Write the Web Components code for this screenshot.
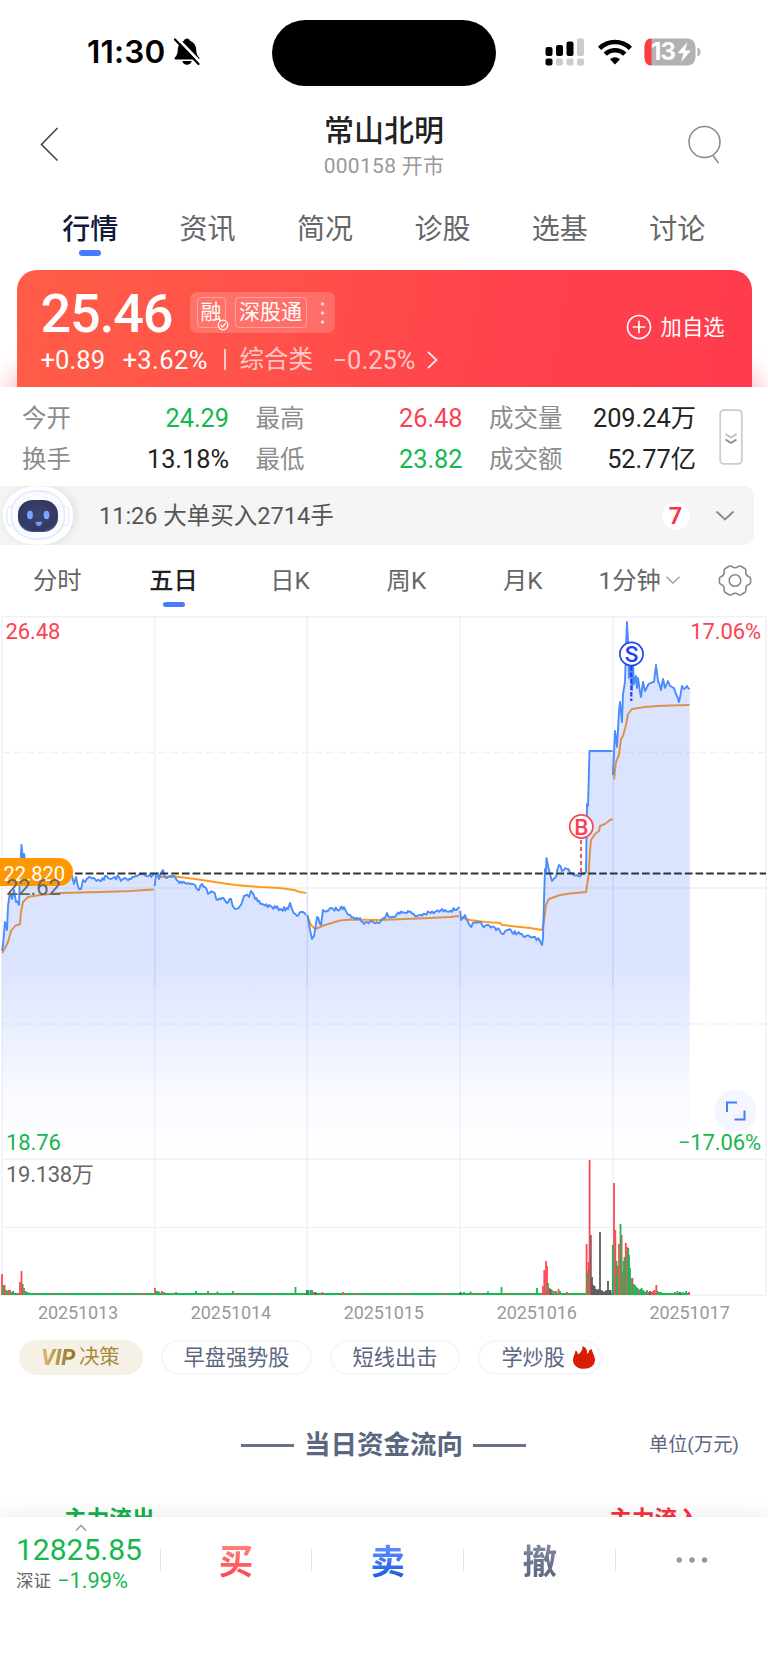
<!DOCTYPE html>
<html lang="zh-CN">
<head>
<meta charset="utf-8">
<title>常山北明 000158</title>
<style>
  html, body {
    margin: 0;
    padding: 0;
    background: #fff;
  }

  body {
    width: 768px;
    height: 1665px;
    overflow: hidden;
    font-family: Roboto, "Noto Sans CJK SC", sans-serif;
    color: #222;
  }
</style>
</head>
<body>
<stock-page></stock-page>

<script>
class StatusBar extends HTMLElement {
  constructor() {
    super();
    this.attachShadow({ mode: 'open' });
  }

  connectedCallback() {
    this.shadowRoot.innerHTML = `
      <style>
        :host {
          display: grid;
          grid-template-columns: 272px 224px 1fr;
          height: 104px;
          box-sizing: border-box;
          padding-top: 20px;
          align-items: start;
        }
        .left, .right {
          display: flex;
          height: 64px;
          align-items: center;
        }
        .left { padding-left: 87px; }
        .time {
          font: 600 31.500px/66px Inter, sans-serif;
          letter-spacing: 0.2px;
          color: #000;
          width: 86px;
          white-space: nowrap;
        }
        .island {
          height: 66px;
          border-radius: 33px;
          background: #000;
        }
        .right { padding-left: 49px; }
        .wifi { margin-left: 13px; }
        .battery {
          position: relative;
          margin-left: 12px;
          width: 57px;
          height: 28px;
        }
        .level {
          position: absolute;
          left: 7px;
          top: 0;
          font: 700 24px/28px Inter, sans-serif;
          letter-spacing: -0.8px;
          color: #fff;
        }
        svg { display: block; flex: none; }
      </style>
      <div class="left">
        <span class="time">11:30</span>
        <svg width="28" height="30" viewBox="0 0 28 30">
          <path d="M14 1.5c1.6 0 2.8 1 3 2.300 4 1.500 6 4.800 6.200 8.800.2 4 .9 6 2.900 7.900.8.700.4 2-.8 2H2.700c-1.200 0-1.600-1.300-.8-2 2-1.900 2.700-3.900 2.900-7.900.2-4 2.200-7.300 6.200-8.800.2-1.300 1.400-2.300 3-2.300z" fill="#000"/>
          <path d="M9.300 24h9.400c-.5 2.400-2.300 3.800-4.700 3.800s-4.200-1.400-4.700-3.800z" fill="#000"/>
          <path d="M4 1l24 25" stroke="#fff" stroke-width="2.600"/>
          <path d="M2 2.500l23.500 24.500" stroke="#000" stroke-width="2.200" stroke-linecap="round"/>
        </svg>
      </div>
      <div class="island"></div>
      <div class="right">
        <svg width="40" height="28" viewBox="0 0 40 28">
          <g fill="#000">
            <rect x="0.500" y="9" width="7" height="9" rx="2"/>
            <rect x="11" y="7" width="7" height="11" rx="2"/>
            <rect x="21.500" y="3.500" width="7" height="14.500" rx="2"/>
            <rect x="0.500" y="20.500" width="7" height="7" rx="2"/>
          </g>
          <g fill="#ccc">
            <rect x="32" y="0.500" width="7" height="17.500" rx="2"/>
            <rect x="11" y="20.500" width="7" height="7" rx="2"/>
            <rect x="21.500" y="20.500" width="7" height="7" rx="2"/>
            <rect x="32" y="20.500" width="7" height="7" rx="2"/>
          </g>
        </svg>
        <svg class="wifi" width="34" height="26" viewBox="0 0 34 26" fill="none" stroke="#000" stroke-width="4.600">
          <path d="M1.600 9.300a22 22 0 0 1 30.800 0"/>
          <path d="M7.200 15.200a14 14 0 0 1 19.600 0"/>
          <path d="M17 25.500l-5-5.200a7.200 7.200 0 0 1 10 0z" fill="#000" stroke="none"/>
        </svg>
        <div class="battery">
          <svg width="57" height="28" viewBox="0 0 57 28">
            <rect x="0.500" y="0.500" width="51" height="27" rx="8" fill="#b2b2b2"/>
            <path d="M7.500 0.500h-1a6 8 0 0 0-6 8v11a6 8 0 0 0 6 8h1z" fill="#ff3b3f"/>
            <path d="M53.500 9.500q3 1 3 4.500t-3 4.500z" fill="#b2b2b2"/>
            <path d="M43.500 4l-10 11.300h6l-2.400 8.700 10-11.500h-6z" fill="#fff"/>
          </svg>
          <span class="level">13</span>
        </div>
      </div>
    `;
  }
}

class StockHeader extends HTMLElement {
  constructor() {
    super();
    this.attachShadow({ mode: 'open' });
  }

  connectedCallback() {
    this.shadowRoot.innerHTML = `
      <style>
        :host {
          display: grid;
          grid-template-columns: 1fr 300px 1fr;
          height: 88px;
          box-sizing: border-box;
          padding: 0 46px 0 38px;
        }
        svg { display: block; margin-top: 20px; }
        .search { justify-self: end; }
        .titles { text-align: center; padding-left: 8px; }
        .name {
          font-weight: 500;
          font-size: 30px;
          line-height: 40px;
          margin-top: 7px;
          color: #222;
        }
        .code {
          font-size: 21px;
          line-height: 26px;
          margin-top: 2px;
          letter-spacing: 0.3px;
          color: #999;
        }
      </style>
      <svg width="24" height="42" viewBox="0 0 24 42" fill="none" stroke="#444" stroke-width="1.600">
        <path d="M19.500 4L3.500 20.500l16 16"/>
      </svg>
      <div class="titles">
        <div class="name"><slot name="name"></slot></div>
        <div class="code"><slot name="code"></slot></div>
      </div>
      <svg class="search" width="36" height="42" viewBox="0 0 36 42" fill="none" stroke="#888" stroke-width="1.500">
        <circle cx="18.500" cy="18" r="15.500"/>
        <path d="M27 31.500l5.500 7.500"/>
      </svg>
    `;
  }
}

class StockTabs extends HTMLElement {
  constructor() {
    super();
    this.attachShadow({ mode: 'open' });
  }

  connectedCallback() {
    const tabs = (this.getAttribute('tabs') || '').split(',');
    this.shadowRoot.innerHTML = `
      <style>
        :host {
          display: grid;
          grid-template-columns: repeat(6, 1fr);
          height: 77px;
          box-sizing: border-box;
          padding: 0 32px 0 31.500px;
          font-size: 28px;
          color: #666;
        }
        .tab {
          display: flex;
          flex-direction: column;
          align-items: center;
          line-height: 40px;
          padding-top: 18px;
        }
        .active { font-weight: 500; color: #111a3a; }
        .active::after {
          content: '';
          width: 22px;
          height: 6px;
          border-radius: 3px;
          background: #4a7bff;
        }
      </style>
      ${tabs.map((t, i) => `<div class="tab ${i === 0 ? 'active' : ''}">${t}</div>`).join('')}
    `;
  }
}

class QuoteCard extends HTMLElement {
  constructor() {
    super();
    this.attachShadow({ mode: 'open' });
  }

  connectedCallback() {
    this.shadowRoot.innerHTML = `
      <style>
        :host {
          display: block;
          height: 118px;
          overflow: hidden;
          color: #fff;
        }
        .card {
          display: flex;
          justify-content: space-between;
          align-items: center;
          height: 118px;
          box-sizing: border-box;
          margin: 0.500px 16.500px 0 16.500px;
          padding: 0 27px 0 24px;
          border-radius: 20px 20px 0 0;
          background: linear-gradient(100deg, #ff5d48 0%, #ff5149 35%, #ff424b 65%, #ff3b4d 100%);
          box-shadow: 0 108px 24px 10px rgba(255, 75, 75, 0.38);
        }
        .top, .bottom, .tags, .add { display: flex; align-items: center; }
        .top { height: 62px; }
        .price {
          font-size: 54px;
          font-weight: 500;
          line-height: 62px;
          width: 149px;
          margin-top: 2px;
          letter-spacing: -1.200px;
        }
        .tags {
          height: 41px;
          box-sizing: border-box;
          padding: 0 5px 0 7px;
          gap: 9px;
          border-radius: 7px;
          background: rgba(255, 255, 255, 0.18);
          font-size: 21px;
        }
        .tag {
          position: relative;
          height: 29px;
          line-height: 29px;
          padding: 0 3px;
          border: 1px solid rgba(255, 255, 255, 0.35);
          border-radius: 4px;
          white-space: nowrap;
        }
        .tag + .tag { padding: 0 3.500px; }
        .tag svg { position: absolute; right: -4px; bottom: -4px; }
        .bottom {
          height: 32px;
          font-size: 25.500px;
          line-height: 32px;
          white-space: nowrap;
        }
        .chg { width: 82px; font-weight: 450; letter-spacing: 0.1px; }
        .pct { width: 101px; font-weight: 450; letter-spacing: 0.400px; }
        .sep { width: 2px; height: 21px; background: rgba(255, 255, 255, 0.7); margin-right: 14px; }
        .muted { color: rgba(255, 255, 255, 0.7); font-size: 24.500px; width: 93px; }
        .muted.n { width: 94px; font-size: 25.500px; }
        .add { gap: 9px; font-size: 21.300px; margin-top: -3px; }
        .add span { margin-top: -4px; }
        svg { display: block; }
      </style>
      <div class="card">
        <div class="main">
          <div class="top">
            <span class="price">25.46</span>
            <div class="tags">
              <span class="tag">融<svg width="12" height="12" viewBox="0 0 12 12">
                  <circle cx="6" cy="6" r="4.800" fill="#ff7a6b" stroke="#fff" stroke-width="1.200"/>
                  <path d="M3.600 6.200l1.700 1.600 3.200-3.300" fill="none" stroke="#fff" stroke-width="1.200"/>
                </svg></span>
              <span class="tag">深股通</span>
              <svg width="14" height="24" viewBox="0 0 14 24" fill="rgba(255,255,255,.7)">
                <circle cx="6.500" cy="3" r="1.800"/><circle cx="6.500" cy="12" r="1.800"/><circle cx="6.500" cy="21" r="1.800"/>
              </svg>
            </div>
          </div>
          <div class="bottom">
            <span class="chg">+0.89</span><span class="pct">+3.62%</span>
            <span class="sep"></span>
            <span class="muted">综合类</span><span class="muted n">−0.25%</span>
            <svg width="12" height="20" viewBox="0 0 12 20" fill="none" stroke="rgba(255,255,255,.85)" stroke-width="1.800">
              <path d="M1 2l8.500 8L1 18"/>
            </svg>
          </div>
        </div>
        <div class="add">
          <svg width="26" height="26" viewBox="0 0 26 26" fill="none" stroke="#fff" stroke-width="1.600">
            <circle cx="13" cy="13" r="11.500"/>
            <path d="M13 6.800v12.400M6.800 13h12.400"/>
          </svg>
          <span>加自选</span>
        </div>
      </div>
    `;
  }
}

class QuoteStats extends HTMLElement {
  constructor() {
    super();
    this.attachShadow({ mode: 'open' });
  }

  connectedCallback() {
    this.shadowRoot.innerHTML = `
      <style>
        :host {
          display: flex;
          height: 99px;
          box-sizing: border-box;
          padding: 11px 0 0 22px;
          background: #fff;
        }
        .grid {
          display: grid;
          grid-template-columns: 207px 207px 207px;
          column-gap: 26.500px;
          grid-auto-rows: 41px;
          line-height: 41px;
        }
        .cell { display: flex; justify-content: space-between; white-space: nowrap; }
        .k { font-size: 24.500px; color: #8c8c8c; }
        .v { font-size: 25.300px; color: #222; }
        .up { color: #fb4252; }
        .down { color: #14b84e; }
        .more { margin: 11px 0 0 23px; }
      </style>
      <div class="grid">
        <div class="cell"><span class="k">今开</span><span class="v down">24.29</span></div>
        <div class="cell"><span class="k">最高</span><span class="v up">26.48</span></div>
        <div class="cell"><span class="k">成交量</span><span class="v">209.24万</span></div>
        <div class="cell"><span class="k">换手</span><span class="v">13.18%</span></div>
        <div class="cell"><span class="k">最低</span><span class="v down">23.82</span></div>
        <div class="cell"><span class="k">成交额</span><span class="v">52.77亿</span></div>
      </div>
      <svg class="more" width="24" height="56" viewBox="0 0 24 56" fill="none">
        <rect x="1.200" y="1.200" width="21.600" height="53.600" rx="3.500" stroke="#ccc" stroke-width="1.700"/>
        <path d="M6.500 25l5.500 3.500 5.500-3.500" stroke="#bbb" stroke-width="1.700"/>
        <path d="M6.500 30.500l5.500 3.500 5.500-3.500" stroke="#888" stroke-width="1.700"/>
      </svg>
    `;
  }
}

class AlertStrip extends HTMLElement {
  constructor() {
    super();
    this.attachShadow({ mode: 'open' });
  }

  connectedCallback() {
    this.shadowRoot.innerHTML = `
      <style>
        :host {
          display: flex;
          align-items: center;
          height: 59px;
          margin-right: 14.500px;
          border-radius: 0 10px 10px 0;
          background: #f5f5f5;
          overflow: hidden;
        }
        svg { display: block; flex: none; }
        .text {
          flex: 1;
          margin-left: 13px;
          font-size: 23.500px;
          line-height: 58px;
          color: #555;
        }
        .count {
          width: 28px;
          height: 28px;
          border-radius: 14px;
          background: #fff;
          text-align: center;
          font-size: 23.500px;
          line-height: 28px;
          font-weight: 600;
          color: #fa3246;
          margin-right: 25px;
        }
        .arrow { margin-right: 19px; }
      </style>
      <svg width="86" height="59" viewBox="0 0 86 59">
        <defs>
          <filter id="sh" x="-20%" y="-20%" width="150%" height="150%">
            <feDropShadow dx="2" dy="0" stdDeviation="4" flood-color="#000" flood-opacity=".1"/>
          </filter>
          <radialGradient id="face" cx=".5" cy=".45" r=".65">
            <stop offset="0" stop-color="#3f4470"/><stop offset=".75" stop-color="#333862"/><stop offset="1" stop-color="#5b6aa8"/>
          </radialGradient>
        </defs>
        <rect x="3" y="0.500" width="70" height="58" rx="31" ry="28" fill="#fff" filter="url(#sh)"/>
        <rect x="7" y="20" width="11" height="20" rx="5" fill="#fff" stroke="#e4ecfb" stroke-width="1.400"/>
        <rect x="58" y="20" width="11" height="20" rx="5" fill="#fff" stroke="#e4ecfb" stroke-width="1.400"/>
        <rect x="11.500" y="5" width="53" height="48" rx="24" ry="22" fill="#f8fbff" stroke="#e4ecfc" stroke-width="1.800"/>
        <rect x="18" y="14" width="40" height="32" rx="15" ry="14" fill="url(#face)"/>
        <ellipse cx="30" cy="29" rx="2.900" ry="4.200" fill="#75a9ff"/>
        <ellipse cx="46.500" cy="29" rx="2.900" ry="4.200" fill="#75a9ff"/>
        <path d="M35.500 35.800h6.600q-.4 4.200-3.300 4.200t-3.300-4.200z" fill="#6d9dff"/>
      </svg>
      <div class="text"><slot></slot></div>
      <div class="count">7</div>
      <svg class="arrow" width="20" height="12" viewBox="0 0 20 12" fill="none" stroke="#888" stroke-width="1.800">
        <path d="M1.500 1.500l8.500 8 8.500-8"/>
      </svg>
    `;
  }
}

class PeriodTabs extends HTMLElement {
  constructor() {
    super();
    this.attachShadow({ mode: 'open' });
  }

  connectedCallback() {
    this.shadowRoot.innerHTML = `
      <style>
        :host {
          display: grid;
          grid-template-columns: repeat(6, 116.400px) 1fr;
          height: 71px;
          margin-left: -1px;
          font-size: 24.300px;
          line-height: 34px;
          color: #666;
        }
        div {
          display: flex;
          flex-direction: column;
          align-items: center;
          padding-top: 19px;
        }
        .active { font-weight: 500; color: #222; }
        .active::after {
          content: '';
          width: 22px;
          height: 5.500px;
          border-radius: 2.800px;
          background: #4a7bff;
          margin-top: 3.500px;
        }
        .drop { flex-direction: row; align-items: flex-start; justify-content: center; gap: 5px; }
        .drop svg { margin-top: 12px; }
        .gear { padding: 19px 0 0 5px; }
      </style>
      <div>分时</div>
      <div class="active">五日</div>
      <div>日K</div>
      <div>周K</div>
      <div>月K</div>
      <div class="drop">1分钟
        <svg width="14" height="9" viewBox="0 0 14 9" fill="none" stroke="#999" stroke-width="1.300"><path d="M.5.800l6.500 6.400L13.500.800"/></svg>
      </div>
      <div class="gear">
        <svg width="34" height="33" viewBox="0 0 34 33" fill="none" stroke="#888" stroke-width="1.600" stroke-linejoin="round">
          <path d="M11 2.300q2-.8 3 .4 3 2.200 6 0 1-1.200 3-.4l4 2.400q1.300 1 .8 2.800-.4 4 3.400 5.300 1.400.4 1.400 2v3.400q0 1.600-1.400 2-3.800 1.300-3.400 5.300.5 1.800-.8 2.800l-4 2.400q-2 .8-3-.4-3-2.200-6 0-1 1.200-3 .4l-4-2.400q-1.300-1-.8-2.800.4-4-3.400-5.300-1.400-.4-1.400-2v-3.400q0-1.600 1.400-2 3.800-1.300 3.400-5.300-.5-1.800.8-2.800z"/>
          <circle cx="17" cy="16.500" r="5.800"/>
        </svg>
      </div>
    `;
  }
}

// Coordinates below are in the chart's own pixel space: y = 0 is the top border
const PRICE = [
  [[2,335],[3,329],[5,306],[7,314],[8,290],[10,276],[12,283],[14,274],[16,286],[19,289],[20,255],[21.5,229],[23,244],[24,238],[26,252],[40,262],[60,264],[72,260],[74,268],[76,261],[79,273],[81,273],[83,264],[85,266],[88,262],[95,263],[104,264],[105,260],[110,263],[119,261],[121,265],[125,262],[131,263],[137,260],[142,258],[147,260],[154,259]],
  [[154.7,270],[156,258],[158,257],[159,263],[161,257],[163,254],[165,261],[170,260],[174,260],[178,265],[185,267],[190,268],[195,269],[199,274],[202,268],[205,271],[208,278],[213,276],[218,284],[222,282],[227,287],[231,283],[234,292],[240,290],[244,280],[249,281],[251,275],[255,283],[262,288],[272,291],[280,293],[288,293],[290,287],[292,293],[297,300],[301,296],[306,299]],
  [[307.5,299],[310,314],[312,323],[314,320],[317,301],[321,309],[323,294],[327,295],[333,293],[340,293],[344,291],[350,299],[355,303],[360,302],[364,308],[370,305],[378,307],[385,302],[387,297],[391,301],[397,298],[408,295],[415,300],[425,298],[435,296],[445,294],[455,294],[459.5,291]],
  [[460.3,295],[461,304],[463,302],[465,299],[468,306],[470,310],[477,307],[485,310],[492,311],[499,313],[502,318],[507,314],[520,318],[525,321],[535,321],[540,325],[542,329],[543,322],[544,284],[545,253],[546,256],[546.5,242],[548,250],[550,258],[552,265],[556,261],[559,249],[562,255],[567,253],[572,257],[578,260],[582,257],[586,256],[587,188],[588,190],[589.5,135],[612.5,135]],
  [[613,159],[615,115],[617,131],[619,95],[620,86],[622,106],[623,78],[625,66],[626,30],[627,6],[628,24],[629,62],[630,40],[632,74],[633,48],[634,68],[636,60],[637,72],[638,62],[640,76],[641,81],[643,66],[645,75],[648,69],[651,67],[654,66],[656,49],[658,65],[659,67],[661,74],[663,63],[665,72],[668,65],[670,70],[674,72],[677,80],[679,86],[682,70],[684,73],[687,70],[689.7,73]]
];

const AVERAGE = [
  [[2,337],[4,334],[8,326],[11,315],[15,310],[20,308],[21,296],[23,286],[28,281],[40,279],[60,277],[100,276],[130,275],[154,273.5]],
  [[155,261],[175,260.5],[195,263],[215,266],[235,269],[260,271],[280,272],[294,274],[300,276],[306,277]],
  [[307.5,300],[311,309],[315,313],[325,309],[340,304.5],[350,303.5],[380,304],[430,302],[450,301],[459,300]],
  [[461,301],[470,304],[485,306],[500,307],[502,309],[530,312],[542,314],[544,305],[546,289],[549,283],[560,279],[570,277.5],[586,276],[588.5,260],[590,234],[591,224],[595,218],[599,215],[600,210],[605,208],[610,204],[613,203]],
  [[613,150],[614,163],[616,146],[619,139],[621,123],[623,120],[626,109],[628,98],[632,93],[645,91],[658,90],[670,89.5],[689.5,89]]
];

// [x, height, colour]: r up, g down, k flat
const VOLUME = [
  [2,21,'r'],[3.3,10,'g'],[4.6,10,'r'],[6,5,'g'],[7.3,4,'g'],[8.6,5,'r'],[10,5,'r'],[11.3,3,'g'],[13,4,'g'],[15,2,'g'],[20,13,'r'],[21.5,24,'r'],[22.7,11,'g'],[24,7,'r'],[25.5,4,'g'],[27,3,'g'],[29,2.5,'g'],
  [155,7,'r'],[156.3,4,'g'],[158,4,'g'],[159.5,3,'g'],[162,4,'r'],[164,3,'g'],[176,3,'g'],[196,4,'g'],[208,4,'g'],[217.5,3.5,'g'],[233,4,'g'],[295.5,8,'g'],
  [307,5,'k'],[308.3,5,'g'],[310.5,5,'g'],[312,5,'g'],[313.5,3,'r'],[315.5,3,'k'],[322.5,3,'r'],[343,3,'r'],
  [460.5,3,'k'],[464,3,'g'],[470.5,3.5,'g'],[488,3.5,'g'],[501.5,8,'g'],
  [537,7,'g'],[543,9,'r'],[544.3,25,'r'],[546,34,'r'],[547,29,'r'],[548,12,'g'],[549.3,7,'r'],[550.6,6,'k'],[552,5,'g'],[554,4,'r'],[556,4,'g'],[558.5,6,'r'],[560,4,'g'],[567,3,'r'],
  [586.6,51,'r'],[588.6,33,'r'],[587.8,24,'g'],[590.8,60,'k'],[589.6,135,'r'],[592,18,'k'],[593.3,10,'k'],[594.6,9,'k'],[596,6,'k'],[597.3,5,'k'],[598.6,6,'k'],[600,63,'k'],[601.3,5,'k'],[602.6,4,'k'],[604,3,'k'],[605.3,4,'k'],[606.6,5,'k'],[608,14,'k'],[609.3,5,'k'],[610.6,5,'k'],
  [614,112,'r'],[615.3,65,'r'],[612.8,50,'g'],[616.5,34,'g'],[617.8,29,'r'],[617.3,20,'g'],[619,51,'r'],[621.6,60,'r'],[620.5,71,'g'],[622.6,23,'r'],[623.6,34,'g'],[625.8,52,'r'],[624.6,38,'g'],[627,48,'r'],[628.2,47,'g'],[629,40,'g'],[630,27,'g'],[631,17,'g'],[632.5,17,'r'],[633.5,11,'g'],[635,10,'g'],[636.3,8,'g'],[637.6,7,'g'],[639,5,'r'],[640.3,6,'g'],[641.6,7,'g'],[643,5,'g'],[644.3,4,'g'],[645.6,3,'g'],[647,5,'r'],[648.5,3,'g'],[650,4,'k'],[651.5,3,'r'],[653,4,'r'],[654.5,5,'r'],[656.3,10,'r'],[657.6,4,'g'],[659,3,'g'],[661,3,'g'],[675,3,'g'],[677.5,4,'g'],[680,3,'k'],[683,3,'g'],[686,4,'g'],[689,3,'r']
];

class FiveDayChart extends HTMLElement {
  constructor() {
    super();
    this.attachShadow({ mode: 'open' });
    this._seed = 7;
  }

  connectedCallback() {
    this.render();
  }

  _rand() {
    this._seed = (this._seed * 16807) % 2147483647;
    return this._seed / 2147483647 - 0.5;
  }

  // Fill the gap between far-apart samples with small minute-level moves
  _detail(points) {
    const out = [points[0]];
    for (let i = 1; i < points.length; i++) {
      const [x0, y0] = points[i - 1];
      const [x1, y1] = points[i];
      const n = Math.floor((x1 - x0) / 1.3);
      const flat = y0 === 135 && y1 === 135;
      for (let k = 1; k < n; k++) {
        const t = k / n;
        out.push([x0 + (x1 - x0) * t, y0 + (y1 - y0) * t + (flat ? 0 : this._rand() * 4)]);
      }
      out.push(points[i]);
    }
    return out;
  }

  _line(points) {
    return points.map(([x, y], i) => `${i ? 'L' : 'M'}${x.toFixed(1)} ${y.toFixed(1)}`).join('');
  }

  _bars() {
    const colors = { r: '#ff4753', g: '#17b955', k: '#5c5c5c' };
    let ticks = '';
    for (let x = 3; x < 689; x += 1.3) {
      if (this._rand() > 0.36) {
        ticks += `<rect x="${x.toFixed(1)}" y="677.200" width="1.300" height="1.500" fill="#f2554f"/>`;
      }
    }
    return ticks + VOLUME.map(([x, h, c]) =>
      `<rect x="${x - 0.9}" y="${679 - h}" width="1.800" height="${h}" fill="${colors[c]}"/>`).join('');
  }

  render() {
    const days = PRICE.map(d => this._detail(d));
    const columns = [2, 154.7, 307.3, 460.3, 613, 766];
    const area = `M2 543${days.map(d => this._line(d).replace('M', 'L')).join('')}V543Z`;
    const dates = ['20251013', '20251014', '20251015', '20251016', '20251017'];

    this.shadowRoot.innerHTML = `
      <style>
        :host { display: block; height: 712px; }
        svg { display: block; }
        text { font-size: 22px; letter-spacing: -0.1px; }
        .up { fill: #fb4252; }
        .down { fill: #14b84e; }
        .plain { fill: #666; }
        .date { font-size: 18px; fill: #999; text-anchor: middle; }
        .mark { font-size: 22.500px; font-weight: 500; text-anchor: middle; }
      </style>
      <svg width="768" height="712" viewBox="0 0 768 712">
        <defs>
          <linearGradient id="area" gradientUnits="userSpaceOnUse" x1="0" y1="0" x2="0" y2="543">
            <stop offset="0" stop-color="#4a75ff" stop-opacity=".2"/>
            <stop offset=".64" stop-color="#4a75ff" stop-opacity=".2"/>
            <stop offset=".88" stop-color="#4a75ff" stop-opacity=".035"/>
            <stop offset="1" stop-color="#4a75ff" stop-opacity="0"/>
          </linearGradient>
        </defs>
        <g fill="none" stroke="#f0f1f7" stroke-width="1.400">
          <path d="M2 .7H766M2 272H766M2 543.300H766M2 611.500H766M2 679.300H766"/>
          <path d="M2 136.500H766M2 408H766" stroke-dasharray="8 4"/>
          <path d="${columns.map(x => `M${x} .7V679`).join('')}"/>
        </g>
        <path d="${AVERAGE.map(d => this._line(d)).join('')}" fill="none" stroke="#ff9a1f" stroke-width="2" stroke-linejoin="round"/>
        <path d="${area}" fill="url(#area)"/>
        <path d="${columns.slice(1, 5).map(x => `M${x} ${x > 600 ? 140 : x > 400 ? 300 : 275}V370`).join('')}" stroke="#b9cbfa" stroke-width="1.300" opacity=".55"/>
        <path d="${days.map(d => this._line(d)).join('')}" fill="none" stroke="#4a8cfb" stroke-width="1.900" stroke-linejoin="round"/>
        <path d="M0 257.500H766" stroke="#333" stroke-width="2" stroke-dasharray="7.700 3"/>

        <path d="M581 224V257" stroke="#fb4252" stroke-width="1.800" stroke-dasharray="4 3"/>
        <circle cx="581.300" cy="210.500" r="11.600" fill="#fff" stroke="#fb4252" stroke-width="1.700"/>
        <text class="mark up" x="581.300" y="218.500">B</text>
        <path d="M631.300 50V85" stroke="#2443e8" stroke-width="2.200" stroke-dasharray="4.500 2"/>
        <circle cx="631.500" cy="38" r="11.600" fill="#fff" stroke="#2443e8" stroke-width="1.700"/>
        <text class="mark" x="631.500" y="46" fill="#2443e8">S</text>

        <path d="M0 242H59a14 14 0 0 1 0 28H0z" fill="#ff9800"/>
        <text x="3.500" y="264.500" fill="#fff" style="font-size: 20.200px">22.820</text>
        <text class="plain" x="6" y="278.500">22.62</text>

        <text class="up" x="5.500" y="23">26.48</text>
        <text class="up" x="761" y="23" text-anchor="end">17.06%</text>
        <text class="down" x="6" y="534">18.76</text>
        <circle cx="735.500" cy="495" r="21" fill="#f3f6fe"/>
        <path d="M727 496V486.500H737M734.500 503.500H744.500V494.500" fill="none" stroke="#4a7bf7" stroke-width="2"/>
        <text class="down" x="761" y="534" text-anchor="end">−17.06%</text>
        <text class="plain" x="6" y="566" style="letter-spacing: -0.300px">19.138万</text>

        <rect x="2" y="677" width="688" height="2" fill="#17b955"/>
        ${this._bars()}
        ${dates.map((d, i) => `<text class="date" x="${78 + i * 152.9}" y="703">${d}</text>`).join('')}
      </svg>
    `;
  }
}

class QuickChip extends HTMLElement {
  constructor() {
    super();
    this.attachShadow({ mode: 'open' });
  }

  connectedCallback() {
    this.shadowRoot.innerHTML = `
      <style>
        :host {
          display: flex;
          align-items: center;
          justify-content: center;
          gap: 8px;
          box-sizing: border-box;
          height: 35px;
          border: 2px solid #f6f6f8;
          border-radius: 18px;
          background: #fff;
          font-size: 21.200px;
          line-height: 31px;
          color: #5b6680;
          white-space: nowrap;
        }
        :host([vip]) {
          gap: 3px;
          padding-right: 2px;
          border-color: #f6f1e6;
          background: #f6f1e6;
          font-size: 20.500px;
          color: #a98a3c;
        }
        :host([hot]) { justify-content: flex-end; padding-right: 5px; }
        .vip {
          font-size: 22.500px;
          font-weight: 800;
          font-style: italic;
          letter-spacing: -0.400px;
          padding: 0 1px;
          background: linear-gradient(90deg, #e0bd77, #8f7127);
          -webkit-background-clip: text;
          background-clip: text;
          color: transparent;
        }
      </style>
      ${this.hasAttribute('vip') ? '<span class="vip">VIP</span>' : ''}
      <span><slot></slot></span>
      ${this.hasAttribute('hot') ? `
        <svg width="22" height="23" viewBox="0 0 22 23">
          <path d="M9.500 0c3.800 1.600 5 4.600 4.600 7.800 1.300-.6 1.900-1.800 1.900-3.300l3-1.500C18.500 6 22 9.500 22 14c0 5-4.400 8.800-11 8.800S0 19 0 14.200C0 10.600 1.800 8.500 2.500 4.500c1.400.6 2.300 2 2.500 4C7.800 6.500 9.800 4 9.500 0z" fill="#d81e06"/>
        </svg>` : ''}
    `;
  }
}

class FundFlow extends HTMLElement {
  constructor() {
    super();
    this.attachShadow({ mode: 'open' });
  }

  connectedCallback() {
    this.shadowRoot.innerHTML = `
      <style>
        :host {
          display: block;
          height: 122px;
          overflow: hidden;
        }
        .head {
          display: grid;
          grid-template-columns: 1fr auto 1fr;
          align-items: center;
          height: 40px;
          padding: 30px 29px 0 28px;
          color: #5b6680;
        }
        .title {
          grid-column: 2;
          display: flex;
          align-items: center;
          gap: 10px;
          font-size: 26.500px;
          font-weight: 700;
          line-height: 40px;
        }
        .title::before, .title::after {
          content: '';
          width: 53px;
          height: 3px;
          background: #667089;
        }
        .unit {
          justify-self: end;
          font-size: 19.200px;
          line-height: 28px;
        }
        .sides {
          display: flex;
          justify-content: space-between;
          padding: 0 68px 0 64px;
          margin-top: 39px;
          font-size: 22.700px;
          font-weight: 700;
          line-height: 32px;
        }
        .out { color: #16b04c; }
        .in { color: #f8323f; }
      </style>
      <div class="head">
        <div class="title">当日资金流向</div>
        <div class="unit">单位(万元)</div>
      </div>
      <div class="sides"><span class="out">主力流出</span><span class="in">主力流入</span></div>
    `;
  }
}

class TradeBar extends HTMLElement {
  constructor() {
    super();
    this.attachShadow({ mode: 'open' });
  }

  connectedCallback() {
    this.shadowRoot.innerHTML = `
      <style>
        :host {
          position: relative;
          display: grid;
          grid-template-columns: 159.500px repeat(4, 151.900px);
          height: 148px;
          background: #fff;
          box-shadow: 0 -4px 16px rgba(0, 0, 0, 0.07);
        }
        .index { padding-left: 16px; white-space: nowrap; }
        .index svg { display: block; margin: 7px 0 0 59px; }
        .value {
          font-size: 30px;
          font-weight: 450;
          line-height: 36px;
          margin-top: 1px;
          color: #14b84e;
        }
        .sub {
          display: flex;
          align-items: center;
          gap: 6px;
          font-size: 17.500px;
          line-height: 24px;
          color: #666;
          margin-top: 1px;
        }
        .sub b { font-size: 21.800px; font-weight: 400; color: #14b84e; }
        .btn {
          display: flex;
          align-items: center;
          justify-content: center;
          height: 22px;
          margin-top: 32px;
          border-left: 1.500px solid #e3e3e3;
          font-size: 34.500px;
          font-weight: 700;
          line-height: 48px;
        }
        .btn span {
          margin-top: 3px;
          -webkit-background-clip: text;
          background-clip: text;
          color: transparent;
        }
        .buy { background-image: linear-gradient(#ff7d78 20%, #ff4650 80%); }
        .sell { background-image: linear-gradient(#5d8bff 20%, #1c5fe0 80%); }
        .cancel { background-image: linear-gradient(#7d869c 20%, #5d6780 80%); }
      </style>
      <div class="index">
        <svg width="12" height="7" viewBox="0 0 12 7" fill="none" stroke="#999" stroke-width="1.500"><path d="M1 6.500l5-5 5 5"/></svg>
        <div class="value">12825.85</div>
        <div class="sub">深证<b>−1.99%</b></div>
      </div>
      <div class="btn"><span class="buy">买</span></div>
      <div class="btn"><span class="sell">卖</span></div>
      <div class="btn"><span class="cancel">撤</span></div>
      <div class="btn">
        <svg width="32" height="6" viewBox="0 0 32 6" fill="#999"><circle cx="3.200" cy="3" r="2.700"/><circle cx="16" cy="3" r="2.700"/><circle cx="28.500" cy="3" r="2.700"/></svg>
      </div>
    `;
  }
}

class StockPage extends HTMLElement {
  constructor() {
    super();
    this.attachShadow({ mode: 'open' });
  }

  connectedCallback() {
    this.shadowRoot.innerHTML = `
      <style>
        :host { display: flex; flex-direction: column; width: 768px; height: 1665px; }
        .chips {
          display: grid;
          grid-template-columns: 124px 151px 130px 124px;
          gap: 18px;
          height: 55px;
          padding: 12px 0 0 19px;
        }
      </style>
      <status-bar></status-bar>
      <stock-header><span slot="name">常山北明</span><span slot="code">000158 开市</span></stock-header>
      <stock-tabs tabs="行情,资讯,简况,诊股,选基,讨论"></stock-tabs>
      <quote-card></quote-card>
      <quote-stats></quote-stats>
      <alert-strip>11:26 大单买入2714手</alert-strip>
      <period-tabs></period-tabs>
      <five-day-chart></five-day-chart>
      <div class="chips">
        <quick-chip vip>决策</quick-chip>
        <quick-chip>早盘强势股</quick-chip>
        <quick-chip>短线出击</quick-chip>
        <quick-chip hot>学炒股</quick-chip>
      </div>
      <fund-flow></fund-flow>
      <trade-bar></trade-bar>
    `;
  }
}

customElements.define('status-bar', StatusBar);
customElements.define('stock-header', StockHeader);
customElements.define('stock-tabs', StockTabs);
customElements.define('quote-card', QuoteCard);
customElements.define('quote-stats', QuoteStats);
customElements.define('alert-strip', AlertStrip);
customElements.define('period-tabs', PeriodTabs);
customElements.define('five-day-chart', FiveDayChart);
customElements.define('quick-chip', QuickChip);
customElements.define('fund-flow', FundFlow);
customElements.define('trade-bar', TradeBar);
customElements.define('stock-page', StockPage);
</script>
</body>
</html>
